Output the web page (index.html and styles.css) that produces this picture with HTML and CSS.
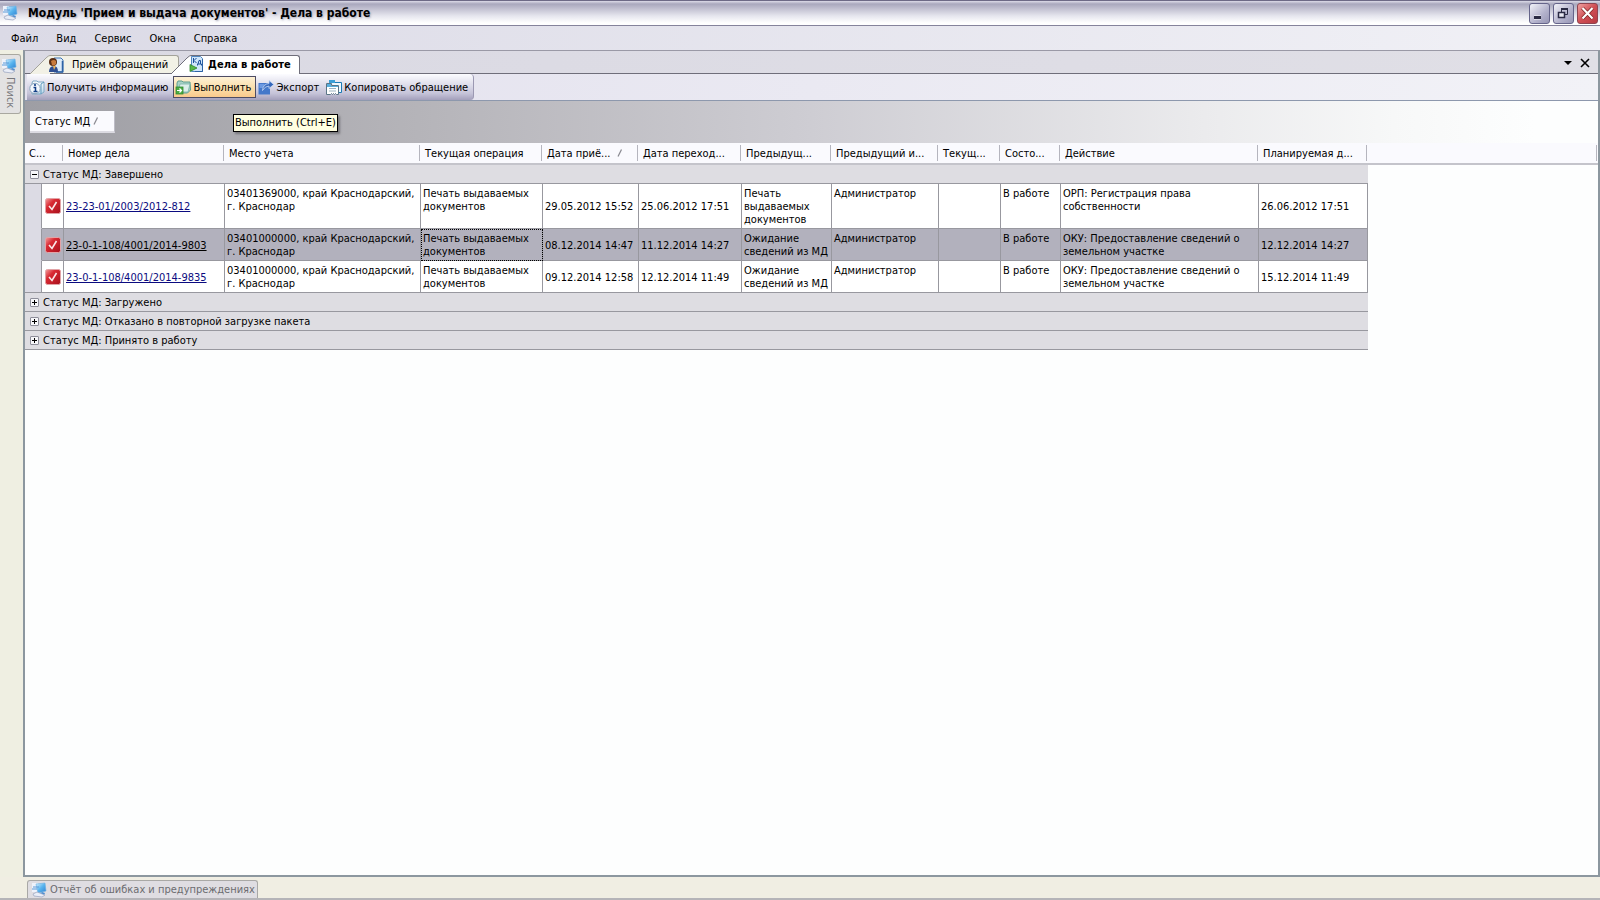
FILE: index.html
```html
<!DOCTYPE html>
<html lang="ru">
<head>
<meta charset="utf-8">
<title>Модуль 'Прием и выдача документов' - Дела в работе</title>
<link rel="stylesheet" href="styles.css">
</head>
<body>
<svg class="defs" aria-hidden="true">
  <defs>
    <linearGradient id="gBlue" x1="0" y1="0" x2="1" y2="1"><stop offset="0" stop-color="#d9f1ff"/><stop offset=".5" stop-color="#58b4ee"/><stop offset="1" stop-color="#2f7fd0"/></linearGradient>
    <linearGradient id="gRed" x1="0" y1="0" x2="1" y2="1"><stop offset="0" stop-color="#f4a0a0"/><stop offset=".35" stop-color="#d92a33"/><stop offset="1" stop-color="#a8101c"/></linearGradient>
    <linearGradient id="gFolder" x1="0" y1="0" x2="0" y2="1"><stop offset="0" stop-color="#ffffff"/><stop offset="1" stop-color="#b8d6ea"/></linearGradient>
    <symbol id="pc" viewBox="0 0 16 16">
      <path d="M0 1h6v9H0z" fill="#eef2fb"/>
      <path d="M4 2l9-1 1 8-8 2z" fill="url(#gBlue)" stroke="#6aaee0" stroke-width=".6"/>
      <path d="M1 5h6M0 7h5" stroke="#5b9ad8" stroke-width="1"/>
      <path d="M10 10l3 1-1 2-4-1z" fill="#4a8fd4"/>
      <path d="M1 12l4-2 8 3-3 2-8-1z" fill="#e9edf7" stroke="#96a2bd" stroke-width=".7"/>
    </symbol>
    <symbol id="check" viewBox="0 0 16 16">
      <rect x=".5" y=".5" width="15" height="15" rx="2" fill="url(#gRed)" stroke="#e2a3a6"/>
      <path d="M4 8l3 3.500 4.500-7.500" fill="none" stroke="#fbe9e9" stroke-width="1.600"/>
    </symbol>
  </defs>
</svg>

<header class="titlebar">
  <svg class="icon"><use href="#pc"/></svg>
  <h1 class="title">Модуль 'Прием и выдача документов' - Дела в работе</h1>
  <div class="winbtns">
    <button class="winbtn" aria-label="Свернуть"><svg viewBox="0 0 19 19"><path d="M4 13.500h7" stroke="#fff" stroke-width="4"/><path d="M4 13.500h7" stroke="#2b2b44" stroke-width="3"/></svg></button>
    <button class="winbtn" aria-label="Восстановить"><svg viewBox="0 0 19 19"><path d="M7.500 8V4.500h6v6H11" fill="none" stroke="#2b2b44"/><path d="M7 5h7" stroke="#2b2b44" stroke-width="2"/><path d="M4.500 8.500h6v5h-6z" fill="#e9e9f2" stroke="#2b2b44" stroke-width="1.500"/></svg></button>
    <button class="winbtn close" aria-label="Закрыть"><svg viewBox="0 0 19 19"><path d="M4.500 4l10 10.500M14.500 4l-10 10.500" stroke="#7c2424" stroke-width="3.600"/><path d="M4.500 4l10 10.500M14.500 4l-10 10.500" stroke="#fff" stroke-width="2.200"/></svg></button>
  </div>
</header>

<nav class="menubar">
  <button>Файл</button><button>Вид</button><button>Сервис</button><button>Окна</button><button>Справка</button>
</nav>

<div class="workspace">
  <aside class="rail">
    <button class="railtab"><svg class="icon"><use href="#pc"/></svg><span>Поиск</span></button>
  </aside>

  <main class="panel">
    <div class="tabstrip">
      <div class="tabs" role="tablist">
        <button class="tab" role="tab" aria-selected="false">
          <svg class="slant" viewBox="0 0 20 19"><path class="fill" d="M0 19L16 3Q18.500 .5 20 .5V19z"/><path class="edge" d="M0 19L16 3Q18.500 .5 20 .5"/></svg>
          <span class="tabbody">
            <svg class="icon" viewBox="0 0 16 16"><path d="M6 1h7l2 2v12H6z" fill="#dceaf8" stroke="#3f75b5"/><path d="M14.500 4v11H8" fill="none" stroke="#2d62a5" stroke-width="1.500"/><circle cx="5" cy="5" r="4" fill="#5a2f16"/><path d="M3 4q3-2 5 0v3q-2 2.500-4 1z" fill="#c87a3c"/><path d="M1 15q0-6 5-6 4 0 4 6z" fill="#2d4e92"/><path d="M5 9l1 4 2-4z" fill="#efb45a"/></svg>
            <span>Приём обращений</span>
          </span>
        </button>
        <button class="tab active" role="tab" aria-selected="true">
          <svg class="slant" viewBox="0 0 20 19"><path class="fill" d="M0 19L16 3Q18.500 .5 20 .5V19z"/><path class="edge" d="M0 19L16 3Q18.500 .5 20 .5"/></svg>
          <span class="tabbody">
            <svg class="icon" viewBox="0 0 16 16"><path d="M2.500 .5h9l2 2v13h-11z" fill="#cfe6fa" stroke="#4f86c0"/><path d="M13.500 3v12.500H6" fill="none" stroke="#2d62a5"/><path d="M4.500 2v5M7.500 2L5 4.500 7.500 7M8.500 9.500V8h4v1.500M9 8l1-3.500h1.500V8" fill="none" stroke="#1c4f9a"/><path d="M1 8.500v7l7-3.500z" fill="#58b848" stroke="#2c8427" stroke-width=".8"/></svg>
            <span>Дела в работе</span>
          </span>
        </button>
      </div>
      <div class="stripbtns">
        <button aria-label="Список окон"><svg viewBox="0 0 10 10"><path d="M1 3h8L5 7z" fill="#000"/></svg></button>
        <button aria-label="Закрыть вкладку"><svg viewBox="0 0 10 10"><path d="M1 1l8 8M9 1L1 9" stroke="#000" stroke-width="1.600"/></svg></button>
      </div>
    </div>

    <div class="toolrow">
      <div class="toolbar" role="toolbar">
        <button class="tool">
          <svg class="icon" viewBox="0 0 16 16"><path d="M3 4l1-2h4l1 1h6v10l-3 2H3z" fill="url(#gFolder)" stroke="#7fa9c4"/><path d="M15 3l-3 2v10" fill="none" stroke="#5f9cc0"/><circle cx="6" cy="9.500" r="5.200" fill="#f4f9fe" stroke="#8aa5bd"/><path d="M4.500 8.500h2V12M4.500 12.500h4" fill="none" stroke="#123f86" stroke-width="1.500"/><circle cx="6" cy="6" r="1.100" fill="#123f86"/></svg>
          <span>Получить информацию</span>
        </button>
        <button class="tool hot">
          <svg class="icon" viewBox="0 0 16 16"><path d="M2 4l1-2h4l1 1h7l.5 8-3 3H2z" fill="#a9d2c6" stroke="#5e9f91"/><path d="M5 5h10l-2 8H3z" fill="#dcefeb" stroke="#79b3a8" stroke-width=".8"/><rect x="1" y="8" width="7" height="7" fill="#4cab45" stroke="#2f8a2e" stroke-width=".8"/><path d="M2 11.500h4M4.500 9.500l2 2-2 2" fill="none" stroke="#fff" stroke-width="1.200"/></svg>
          <span>Выполнить</span>
        </button>
        <button class="tool">
          <svg class="icon" viewBox="0 0 16 16"><path d="M.5 4H12v11.500H.5z" fill="#4478ca"/><path d="M1.500 5h5v4h-5z" fill="#6c9ae2"/><path d="M4.500 11.500Q5 5 11 4.500V1.500L15.800 5.500 11 9.500V7Q7 7 4.500 11.500z" fill="#3567bb" stroke="#c9dbf6" stroke-width=".8"/></svg>
          <span>Экспорт</span>
        </button>
        <button class="tool">
          <svg class="icon" viewBox="0 0 16 16"><path d="M3.500 1.500h5v2h7v10h-3" fill="#eef7fd" stroke="#1c7ab5"/><path d="M3 1h6v3H3z" fill="#3d9fd6"/><path d="M.5 4.500h5v2h7v9h-2l-1-1-1 1-1-1-1 1-1-1-1 1H.5z" fill="#fff" stroke="#5b7486"/><path d="M1 5h4v2h7v1H1z" fill="#58aedd"/><path d="M3 9.500h7M3 12h7" stroke="#9db4c2"/></svg>
          <span>Копировать обращение</span>
        </button>
      </div>
    </div>

    <div class="grouppanel">
      <button class="groupchip">Статус МД <svg class="sort" viewBox="0 0 6 8"><path d="M1 7.500L4.500 .5" stroke="#8a8a92" stroke-width="1.300"/></svg></button>
      <div class="tooltip" role="tooltip">Выполнить (Ctrl+E)</div>
    </div>

    <table class="grid">
      <colgroup>
        <col class="c-indent"><col class="c-status"><col class="c-num"><col class="c-place"><col class="c-op"><col class="c-recv"><col class="c-move"><col class="c-prev"><col class="c-prevuser"><col class="c-cur"><col class="c-state"><col class="c-action"><col class="c-plan"><col>
      </colgroup>
      <thead>
        <tr>
          <th colspan="2">С...</th><th>Номер дела</th><th>Место учета</th><th>Текущая операция</th>
          <th>Дата приё... &nbsp;<svg class="sort" viewBox="0 0 6 8"><path d="M1 7.500L4.500 .5" stroke="#8a8a92" stroke-width="1.300"/></svg></th>
          <th>Дата переход...</th><th>Предыдущ...</th><th>Предыдущий и...</th><th>Текущ...</th><th>Состо...</th><th>Действие</th><th>Планируемая д...</th><th></th>
        </tr>
      </thead>
      <tbody>
        <tr class="group"><td colspan="13"><button class="exp" aria-expanded="true" aria-label="Свернуть группу"></button>Статус МД: Завершено</td><td class="void"></td></tr>
        <tr class="row">
          <td class="indent"></td><td class="mid mark"><svg class="icon"><use href="#check"/></svg></td>
          <td class="mid"><a href="#">23-23-01/2003/2012-812</a></td>
          <td>03401369000, край Краснодарский, г. Краснодар</td><td>Печать выдаваемых документов</td>
          <td class="mid">29.05.2012 15:52</td><td class="mid">25.06.2012 17:51</td>
          <td>Печать выдаваемых документов</td><td>Администратор</td><td></td><td>В работе</td>
          <td>ОРП: Регистрация права собственности</td><td class="mid">26.06.2012 17:51</td><td class="void"></td>
        </tr>
        <tr class="row selected">
          <td class="indent"></td><td class="mid mark"><svg class="icon"><use href="#check"/></svg></td>
          <td class="mid"><a href="#">23-0-1-108/4001/2014-9803</a></td>
          <td>03401000000, край Краснодарский, г. Краснодар</td><td class="focus">Печать выдаваемых документов</td>
          <td class="mid">08.12.2014 14:47</td><td class="mid">11.12.2014 14:27</td>
          <td>Ожидание сведений из МД</td><td>Администратор</td><td></td><td>В работе</td>
          <td>ОКУ: Предоставление сведений о земельном участке</td><td class="mid">12.12.2014 14:27</td><td class="void"></td>
        </tr>
        <tr class="row last">
          <td class="indent"></td><td class="mid mark"><svg class="icon"><use href="#check"/></svg></td>
          <td class="mid"><a href="#">23-0-1-108/4001/2014-9835</a></td>
          <td>03401000000, край Краснодарский, г. Краснодар</td><td>Печать выдаваемых документов</td>
          <td class="mid">09.12.2014 12:58</td><td class="mid">12.12.2014 11:49</td>
          <td>Ожидание сведений из МД</td><td>Администратор</td><td></td><td>В работе</td>
          <td>ОКУ: Предоставление сведений о земельном участке</td><td class="mid">15.12.2014 11:49</td><td class="void"></td>
        </tr>
        <tr class="group"><td colspan="13"><button class="exp plus" aria-expanded="false" aria-label="Развернуть группу"></button>Статус МД: Загружено</td><td class="void"></td></tr>
        <tr class="group"><td colspan="13"><button class="exp plus" aria-expanded="false" aria-label="Развернуть группу"></button>Статус МД: Отказано в повторной загрузке пакета</td><td class="void"></td></tr>
        <tr class="group"><td colspan="13"><button class="exp plus" aria-expanded="false" aria-label="Развернуть группу"></button>Статус МД: Принято в работу</td><td class="void"></td></tr>
      </tbody>
    </table>
  </main>
</div>

<footer class="bottombar">
  <button class="bottomtab"><svg class="icon"><use href="#pc"/></svg><span>Отчёт об ошибках и предупреждениях</span></button>
</footer>
</body>
</html>
```

FILE: styles.css
```css
* { box-sizing: border-box; }

body {
  margin: 0;
  min-height: 100vh;
  display: flex;
  flex-direction: column;
  background: #efeee2;
  color: #000;
  font: 11px/13px "DejaVu Sans Condensed", "DejaVu Sans", "Noto Sans", sans-serif;
}

button {
  margin: 0;
  padding: 0;
  border: 0;
  background: none;
  color: inherit;
  font: inherit;
  white-space: nowrap;
}

.defs { position: absolute; width: 0; height: 0; }
.icon { display: block; flex: none; width: 16px; height: 16px; }

/* Title bar */
.titlebar {
  display: flex;
  align-items: center;
  gap: 9px;
  height: 26px;
  padding: 0 2px 0 3px;
  border-top: 1px solid #6d6a86;
  border-bottom: 1px solid #85839b;
  background: linear-gradient(#dcdbe8 0, #a9a8bd 3px, #c3c2d2 8px, #e6e6ee 15px, #fff 22px, #fff 23px);
}
.title {
  flex: 1;
  margin: 0;
  font-size: 12px;
  line-height: 16px;
  font-weight: bold;
  text-shadow: 1px 1px 2px #a9a8b8;
}
.winbtns { display: flex; gap: 3px; }
.winbtn {
  width: 21px;
  height: 21px;
  border: 1px solid #65648a;
  border-radius: 3px;
  background: linear-gradient(135deg, #f2f2f8, #b3b2cc 60%, #9796b5);
}
.winbtn svg { display: block; width: 19px; height: 19px; }
.winbtn.close { border-color: #8e4450; background: linear-gradient(135deg, #eea0a0, #d04f55 50%, #b83a42); }

/* Menu */
.menubar {
  display: flex;
  gap: 18px;
  height: 24px;
  padding: 0 11px;
  background: linear-gradient(90deg, #dbdae6, #f1f1f6);
}

/* Workspace */
.workspace { flex: 1; display: flex; }
.rail { flex: none; width: 23px; padding-top: 4px; background: #efefe2; }
.railtab {
  display: flex;
  flex-direction: column;
  align-items: center;
  gap: 3px;
  width: 21px;
  height: 60px;
  padding: 3px 0 0;
  border: 1px solid #a9a8a0;
  border-left: 0;
  border-radius: 0 3px 3px 0;
  background: #e3e2e2;
  color: #77777b;
}
.railtab span { writing-mode: vertical-rl; }

.panel {
  flex: 1;
  min-width: 0;
  border: 2px solid #8c979f;
  border-top: 1px solid #9a99a6;
  background: #fdfefe;
}

.tabstrip {
  display: flex;
  justify-content: space-between;
  height: 23px;
  padding: 4px 8px 0 5px;
  border-bottom: 1px solid #6f6e7a;
  background: linear-gradient(90deg, #dad9e3, #e0dfe6);
}
.tabs { display: flex; }
.tab { display: flex; height: 18px; }
.tab .slant { width: 20px; height: 19px; flex: none; }
.tab .fill { fill: #f2f1e6; }
.tab .edge { fill: none; stroke: #a3a29a; }
.tabbody {
  display: flex;
  align-items: center;
  gap: 8px;
  height: 18px;
  padding-right: 10px;
  border-top: 1px solid #a3a29a;
  border-right: 1px solid #a3a29a;
  border-radius: 0 3px 0 0;
  background: #f2f1e6;
}
.tabbody .icon { margin-left: -2px; }
.tab.active { position: relative; height: 19px; margin-left: -8px; font-weight: bold; }
.tab.active .tabbody {
  height: 19px;
  gap: 3px;
  padding: 0 8px 2px 0;
  border-color: #6f6e7a;
  background: #fff;
}
.tab.active .fill { fill: #fff; }
.tab.active .edge { stroke: #6f6e7a; }
.stripbtns { display: flex; gap: 7px; height: 16px; }
.stripbtns svg { display: block; width: 10px; height: 10px; }

/* Toolbar */
.toolrow {
  height: 27px;
  padding-left: 2px;
  border-bottom: 1px solid #8d98ad;
  background: linear-gradient(90deg, #e2e0ed, #f2f2f7);
}
.toolbar {
  display: inline-flex;
  align-items: center;
  height: 26px;
  border-right: 1px solid #9b98b2;
  border-radius: 0 4px 4px 0;
  background: linear-gradient(#fcfcff, #dfdeeb 40%, #c5c3d8 75%, #a39fbb);
}
.tool {
  display: flex;
  align-items: center;
  gap: 2px;
  height: 22px;
  padding: 0 4px 0 1px;
  border: 1px solid transparent;
}
.tool.hot { border-color: #4d4c63; background: linear-gradient(#fdf1d5, #fbdca6 60%, #f9c98c); }

/* Group-by panel */
.grouppanel {
  position: relative;
  height: 42px;
  padding: 10px 5px;
  background: linear-gradient(90deg, #9e9ea4, #b5b4b9 25%, #cecdd3 50%, #ebebed 75%, #f7f8f8 87%, #fdfefe 96%);
}
.groupchip {
  width: 85px;
  height: 22px;
  padding-left: 5px;
  border-right: 1px solid #bdbcc6;
  border-bottom: 2px solid #dcdbe2;
  background: #fafafe;
  text-align: left;
}
.sort { width: 6px; height: 8px; }
.tooltip {
  position: absolute;
  left: 208px;
  top: 13px;
  padding: 1px;
  line-height: 14px;
  border: 1px solid #000;
  background: #ffffe1;
  box-shadow: 2px 2px 2px #77777c;
  white-space: nowrap;
}

/* Grid */
.grid {
  width: 100%;
  table-layout: fixed;
  border-collapse: separate;
  border-spacing: 0;
}
.c-indent { width: 17px; }
.c-status { width: 22px; }
.c-num { width: 161px; }
.c-place { width: 196px; }
.c-op { width: 122px; }
.c-recv { width: 96px; }
.c-move { width: 103px; }
.c-prev { width: 90px; }
.c-prevuser { width: 107px; }
.c-cur { width: 62px; }
.c-state { width: 60px; }
.c-action { width: 198px; }
.c-plan { width: 109px; }

.grid th {
  height: 22px;
  padding: 0 2px 0 4px;
  border-bottom: 2px solid #c4c4cb;
  background: linear-gradient(#b5b5be, #b5b5be) right 1px top 2px / 1px 16px no-repeat #fafafe;
  font-weight: normal;
  text-align: left;
  white-space: nowrap;
}
.grid td {
  padding: 3px 0 2px 2px;
  border-right: 1px solid #98989f;
  border-bottom: 1px solid #98989f;
  vertical-align: top;
}
.grid .row td { background: #fff; }
.grid .row.selected td { background: #b2b1bd; }
.grid .row td.mid { vertical-align: middle; }
.grid .row td.mark { padding: 0 0 0 3px; }
.grid .row td.indent { background: #dcdbe4; border-bottom-color: #dcdbe4; }
.grid .row.last td.indent { border-bottom-color: #98989f; }
.grid .row td.focus { outline: 1px dotted #000; outline-offset: -1px; }
.grid a { color: #0b0b80; }
.grid .selected a { color: #000; }
.grid .group td {
  height: 19px;
  padding: 0 0 0 5px;
  border-right: 0;
  background: #dedde2;
  vertical-align: middle;
}
.grid .row td.void, .grid .group td.void { border: 0; background: none; }

.exp {
  display: inline-block;
  width: 9px;
  height: 9px;
  margin-right: 4px;
  border: 1px solid #8e8e9a;
  border-radius: 1px;
  background: linear-gradient(#000, #000) center / 5px 1px no-repeat #f7f7fa;
}
.exp.plus {
  background:
    linear-gradient(#000, #000) center / 5px 1px no-repeat,
    linear-gradient(#000, #000) center / 1px 5px no-repeat #f7f7fa;
}

/* Bottom bar */
.bottombar {
  height: 23px;
  padding: 3px 0 0 27px;
  border-bottom: 2px solid #b5b4b8;
  background: #f0eee3;
}
.bottomtab {
  display: flex;
  align-items: center;
  gap: 2px;
  height: 18px;
  padding: 0 2px 0 4px;
  border: 1px solid #a9a8a6;
  border-bottom: 0;
  border-radius: 3px 3px 0 0;
  background: #dfdde2;
  color: #6c6c70;
}
```
